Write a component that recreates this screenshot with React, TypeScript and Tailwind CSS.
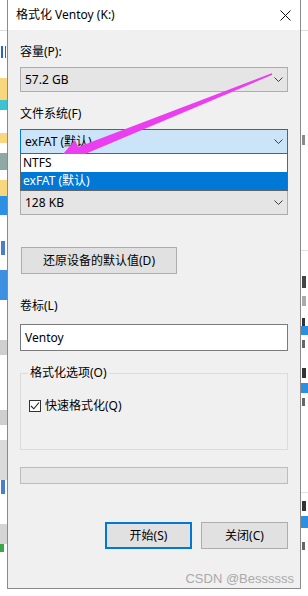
import React from "react";

const font = { fontFamily: '"Noto Sans", "Noto Sans CJK SC", sans-serif' };

function Chevron() {
  return (
    <svg width="9" height="5" viewBox="0 0 9 5" className="shrink-0">
      <polyline points="0.5,0.5 4.5,4.5 8.5,0.5" fill="none" stroke="#3c3c3c" strokeWidth="1" />
    </svg>
  );
}

function Combo({ text, focused }: { text: string; focused?: boolean }) {
  return (
    <div
      className={
        "flex h-[25px] items-center justify-between border pl-[4px] pr-[4px] " +
        (focused ? "border-[#0078d7] bg-[#cce4f7]" : "border-[#adadad] bg-[#e5e5e5]")
      }
    >
      <span className="text-[12px] leading-[16px] text-black">{text}</span>
      <Chevron />
    </div>
  );
}

function LeftStrip() {
  return (
    <div className="flex w-[7px] shrink-0 flex-col bg-white">
      <div className="h-[30px]" />
      <div className="h-[1px] bg-[#dcdcdc]" />
      <div className="h-[15px]" />
      <div className="flex h-[12px]"><div className="ml-[1px] w-[2px] bg-[#2266cc]" /><div className="ml-[2px] w-[1px] bg-[#2266cc]" /></div>
      <div className="h-[20px]" />
      <div className="h-[22px] bg-[#f9d77e]" />
      <div className="h-[10px] bg-[#3cc3cf]" />
      <div className="h-[23px]" />
      <div className="h-[10px] bg-[#f9d77e]" />
      <div className="h-[10px]" />
      <div className="h-[17px] bg-[#8fa8a4]" />
      <div className="h-[10px]" />
      <div className="h-[16px] bg-[#f9d77e]" />
      <div className="h-[19px] bg-[#2b8fe3]" />
      <div className="h-[26px]" />
      <div className="flex h-[14px]"><div className="ml-[1px] w-[4px] bg-[#4a7fd0]" /></div>
      <div className="h-[15px]" />
      <div className="h-[30px] bg-[#3d8fe2]" />
      <div className="h-[40px]" />
      <div className="h-[15px] bg-[#cfcfcf]" />
      <div className="h-[55px]" />
      <div className="h-[15px] bg-[#cfcfcf]" />
      <div className="h-[15px]" />
      <div className="h-[40px] bg-[#dadada]" />
      <div className="flex h-[14px]"><div className="ml-[1px] w-[4px] bg-[#4a7fd0]" /></div>
      <div className="h-[30px]" />
      <div className="h-[20px] bg-[#d4d4d4]" />
      <div className="flex h-[8px]"><div className="w-[4px] bg-[#3aa84a]" /></div>
    </div>
  );
}

function RightStrip() {
  return (
    <div className="flex w-[7px] shrink-0 flex-col bg-white">
      <div className="h-[30px]" />
      <div className="h-[1px] bg-[#dcdcdc]" />
      <div className="h-[104px]" />
      <div className="flex h-[10px]"><div className="ml-[1px] w-[3px] bg-[#8a8a8a]" /></div>
      <div className="h-[105px]" />
      <div className="h-[1px] bg-[#e2e2e2]" />
      <div className="h-[25px]" />
      <div className="flex h-[12px]"><div className="ml-[1px] w-[4px] bg-[#444]" /></div>
      <div className="h-[8px]" />
      <div className="flex h-[10px]"><div className="ml-[1px] w-[4px] bg-[#aaa]" /></div>
      <div className="h-[12px]" />
      <div className="flex h-[8px]"><div className="ml-[1px] w-[3px] bg-[#333]" /></div>
      <div className="h-[9px] bg-[#2b8fe3]" />
      <div className="h-[5px]" />
      <div className="flex h-[8px]"><div className="ml-[1px] w-[3px] bg-[#666]" /></div>
      <div className="h-[20px]" />
      <div className="flex h-[10px]"><div className="ml-[1px] w-[4px] bg-[#333]" /></div>
      <div className="h-[5px]" />
      <div className="h-[10px] bg-[#2b8fe3]" />
      <div className="h-[5px]" />
      <div className="flex h-[8px]"><div className="ml-[1px] w-[3px] bg-[#666]" /></div>
      <div className="h-[86px]" />
      <div className="h-[1px] bg-[#e2e2e2]" />
      <div className="h-[8px]" />
      <div className="flex h-[10px]"><div className="ml-[1px] w-[4px] bg-[#333]" /></div>
      <div className="h-[5px]" />
      <div className="h-[12px] bg-[#2b8fe3]" />
      <div className="h-[14px]" />
      <div className="flex h-[8px]"><div className="ml-[1px] w-[3px] bg-[#666]" /></div>
    </div>
  );
}

export default function App() {
  return (
    <div className="relative flex h-[596px] w-[308px] overflow-hidden bg-white text-black" style={font}>
      <LeftStrip />
      <div className="flex h-[589px] w-[294px] shrink-0 flex-col border-x border-b border-[#8a8a8a]">
        {/* title bar */}
        <div className="flex h-[30px] items-center justify-between bg-white pl-[8px] pr-[8px]">
          <span className="text-[12px] leading-[16px]">格式化 Ventoy (K:)</span>
          <svg width="11" height="11" viewBox="0 0 11 11" className="mr-[1px]">
            <path d="M0.5 0.5 L10.5 10.5 M10.5 0.5 L0.5 10.5" stroke="#111" strokeWidth="1" />
          </svg>
        </div>
        {/* body */}
        <div className="relative flex flex-1 flex-col bg-[#f0f0f0] px-[12px]">
          <div className="mt-[14px] text-[12px] leading-[16px]">容量(P):</div>
          <div className="mt-[7px]"><Combo text="57.2 GB" /></div>
          <div className="mt-[14px] text-[12px] leading-[16px]">文件系统(F)</div>
          <div className="relative mt-[7px]">
            <Combo text="exFAT (默认)" focused />
            <div className="absolute left-0 right-0 top-full z-10 flex flex-col border-x border-b border-[#646464] bg-white">
              <div className="flex h-[18px] items-center pl-[2px] text-[12px] leading-[16px]">NTFS</div>
              <div className="flex h-[18px] items-center bg-[#0078d7] pl-[2px] text-[12px] leading-[16px] text-white">exFAT (默认)</div>
            </div>
          </div>
          {/* allocation-unit label lies hidden under the open list */}
          <div className="mt-[13px] h-[16px]" />
          <div className="mt-[7px]"><Combo text="128 KB" /></div>
          <div className="ml-[1px] mt-[32px] flex h-[27px] w-[156px] items-center justify-center border border-[#adadad] bg-[#e1e1e1] text-[12px] leading-[16px]">
            还原设备的默认值(D)
          </div>
          <div className="mt-[24px] text-[12px] leading-[16px]">卷标(L)</div>
          <div className="mt-[10px] flex h-[27px] items-center border border-[#7a7a7a] bg-white pl-[4px] text-[12px] leading-[16px]">
            Ventoy
          </div>
          <div className="relative mt-[22px] h-[77px] border border-[#dcdcdc]">
            <div className="absolute left-[7px] top-[-9px] bg-[#f0f0f0] px-[2px] text-[12px] leading-[16px]">格式化选项(O)</div>
            <div className="ml-[8px] mt-[24px] flex items-center">
              <div className="flex h-[12px] w-[12px] items-center justify-center border border-[#333] bg-white">
                <svg width="10" height="10" viewBox="0 0 10 10">
                  <polyline points="1,5 3.8,7.8 9,1.5" fill="none" stroke="#222" strokeWidth="1.1" />
                </svg>
              </div>
              <span className="ml-[4px] text-[12px] leading-[16px]">快速格式化(Q)</span>
            </div>
          </div>
          <div className="mt-[17px] h-[17px] border border-[#bcbcbc] bg-[#e6e6e6]" />
          <div className="mt-[38px] flex justify-end gap-[9px]">
            <div className="flex h-[27px] w-[87px] items-center justify-center border-2 border-[#0078d7] bg-[#e1e1e1] text-[12px] leading-[16px]">
              开始(S)
            </div>
            <div className="flex h-[27px] w-[87px] items-center justify-center border border-[#adadad] bg-[#e1e1e1] text-[12px] leading-[16px]">
              关闭(C)
            </div>
          </div>
          <div
            className="absolute bottom-[1px] right-[6px] text-[13px] leading-[16px] text-[#a9a9a9]"
            style={{ fontFamily: '"Liberation Sans", sans-serif' }}
          >
            CSDN @Bessssss
          </div>
        </div>
      </div>
      <RightStrip />
      {/* annotation arrow */}
      <svg className="pointer-events-none absolute left-0 top-0" width="308" height="596" viewBox="0 0 308 596">
        <polygon
          points="58,160 75,140 78.2,147 271.6,73.2 272.4,74.8 81.6,155.6 87,164.5"
          fill="#ea3ef0"
        />
      </svg>
    </div>
  );
}
